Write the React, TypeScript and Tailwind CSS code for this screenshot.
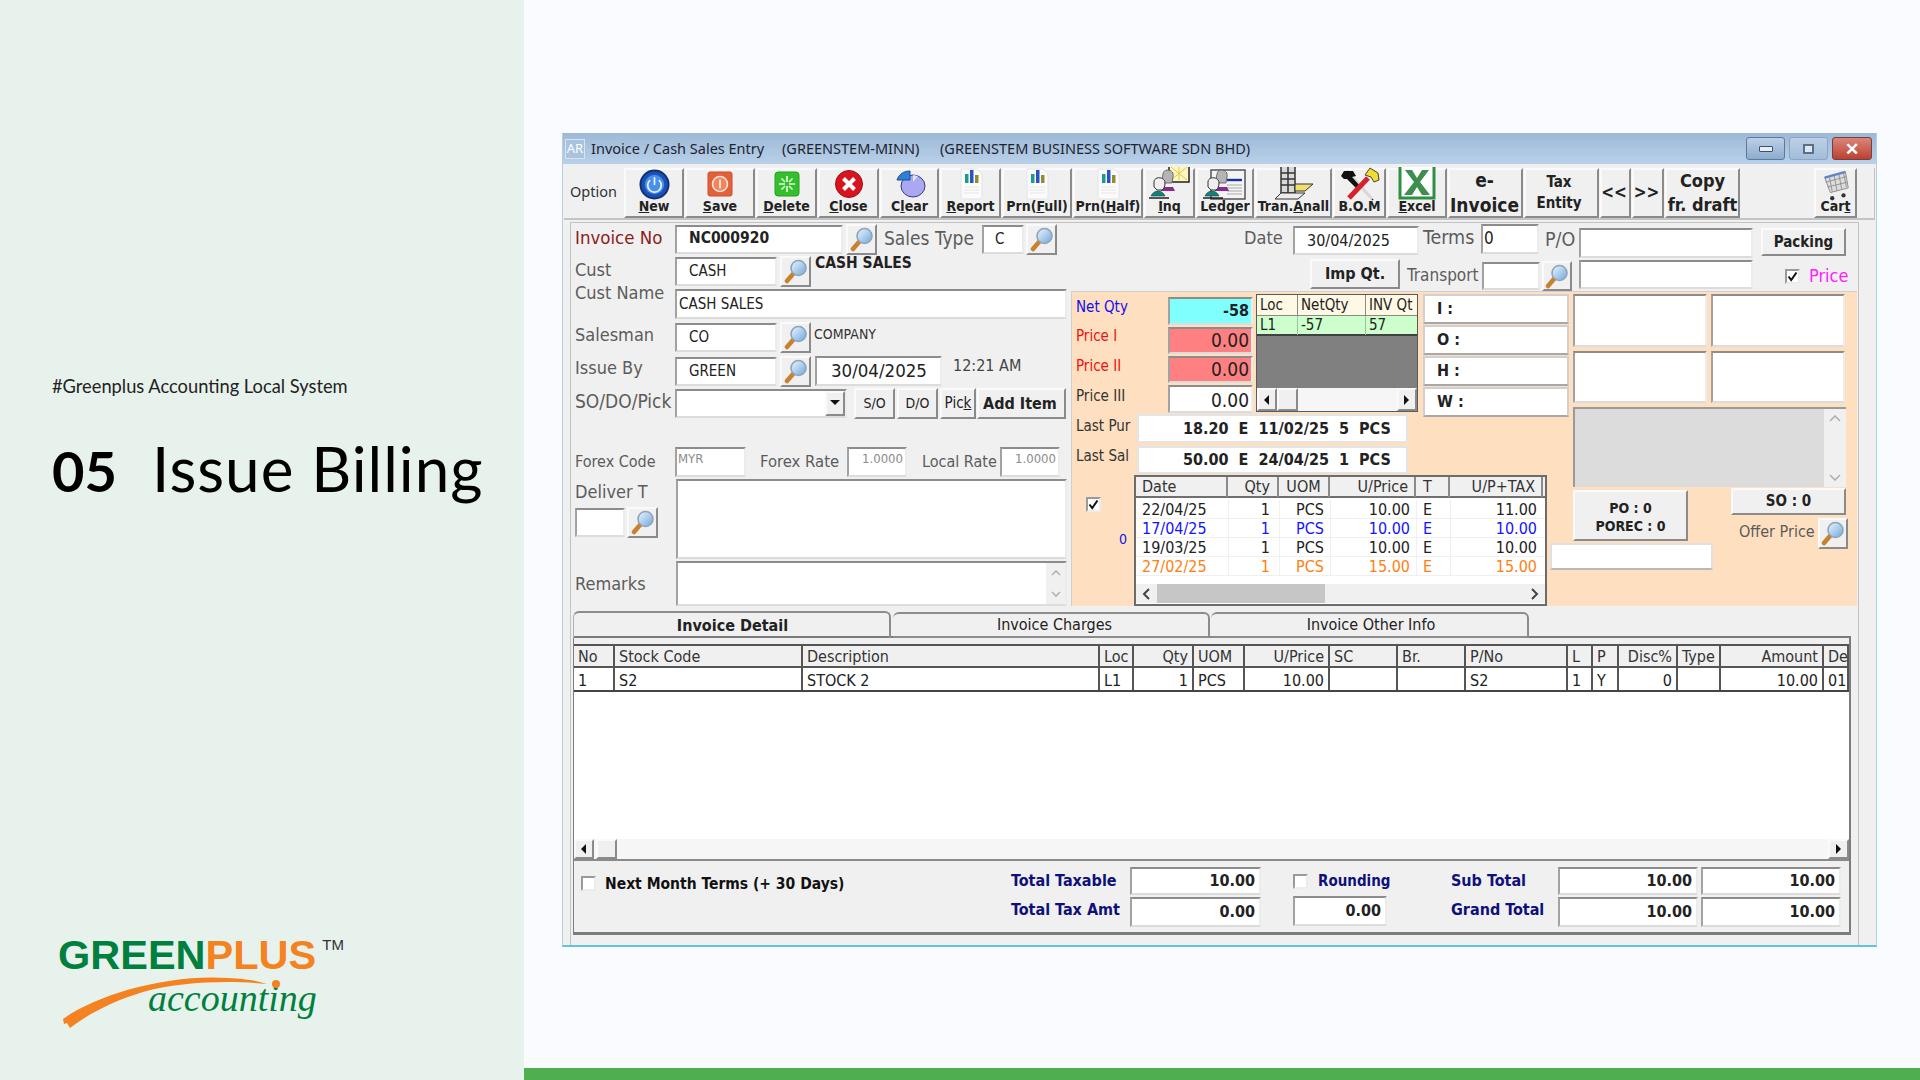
import type { ReactNode } from 'react';

const sunken =
  'flex items-center shrink-0 bg-white border-2 border-t-[#8c8c8c] border-l-[#a2a2a2] border-r-[#ececec] border-b-[#dcdcdc]';
const raised =
  'flex items-center justify-center shrink-0 bg-[#f0f0f0] border-2 border-t-[#fafafa] border-l-[#fafafa] border-r-[#8a8a8a] border-b-[#8a8a8a]';

function Label({ className = '', children }: { className?: string; children: ReactNode }) {
  return (
    <span className={`shrink-0 whitespace-nowrap text-[18px] leading-[22px] text-[#5c5c5c] ${className}`}>
      {children}
    </span>
  );
}

function Magnifier() {
  return (
    <svg width="24" height="25" viewBox="0 0 24 25">
      <defs>
        <linearGradient id="lens" x1="0" y1="0" x2="1" y2="1">
          <stop offset="0" stopColor="#eef7ff" />
          <stop offset="1" stopColor="#6ea6dc" />
        </linearGradient>
      </defs>
      <path d="M9 15 3 22" stroke="#c9812f" strokeWidth="4.5" strokeLinecap="round" />
      <circle cx="14.5" cy="9" r="7.5" fill="url(#lens)" stroke="#8ea4b8" strokeWidth="1.6" />
    </svg>
  );
}

function Search({ className = '' }: { className?: string }) {
  return (
    <div className={`${raised} w-[31px] h-[31px] ${className}`}>
      <Magnifier />
    </div>
  );
}

function Check({ checked = false }: { checked?: boolean }) {
  return (
    <div className="flex items-center justify-center w-[15px] h-[15px] shrink-0 bg-white border-2 border-t-[#9a9a9a] border-l-[#9a9a9a] border-r-[#ececec] border-b-[#ececec]">
      {checked && (
        <svg width="11" height="11" viewBox="0 0 11 11">
          <path d="M1.5 5.5 4.2 9 9.5 1.5" fill="none" stroke="#111" strokeWidth="2" />
        </svg>
      )}
    </div>
  );
}

/* toolbar icons */
function PowerIcon() {
  return (
    <svg width="31" height="31" viewBox="0 0 32 32">
      <circle cx="16" cy="16" r="14.5" fill="#1b50b8" stroke="#12306f" strokeWidth="2" />
      <circle cx="16" cy="16" r="10" fill="#4a8fe8" />
      <path d="M11.5 11.5a7 7 0 1 0 9 0" fill="none" stroke="#e8f2ff" strokeWidth="1.8" />
      <path d="M16 8.5v8" stroke="#e8f2ff" strokeWidth="1.8" />
    </svg>
  );
}

function SaveIcon() {
  return (
    <svg width="28" height="28" viewBox="0 0 28 28">
      <rect x="2" y="2" width="24" height="24" rx="2" fill="#e2603a" stroke="#c9532b" />
      <circle cx="14" cy="14" r="7.5" fill="#ee8660" stroke="#fde6da" strokeWidth="1.6" />
      <path d="M14 9.5v9" stroke="#fde6da" strokeWidth="1.8" />
    </svg>
  );
}

function DeleteIcon() {
  return (
    <svg width="28" height="28" viewBox="0 0 28 28">
      <rect x="2" y="2" width="24" height="24" rx="3" fill="#34c02c" stroke="#279e22" />
      <path
        d="M14 6v6M14 16v6M6 14h6M16 14h6M8.5 8.5l3.5 3.5M16 16l3.5 3.5M19.5 8.5 16 12M12 16l-3.5 3.5"
        stroke="#e6ffe0"
        strokeWidth="1.6"
      />
    </svg>
  );
}

function CloseIcon() {
  return (
    <svg width="30" height="30" viewBox="0 0 30 30">
      <circle cx="15" cy="15" r="13.5" fill="#d8141e" stroke="#9c1016" />
      <path d="M9.5 9.5 20.5 20.5M20.5 9.5 9.5 20.5" stroke="#fff" strokeWidth="4" />
    </svg>
  );
}

function ClearIcon() {
  return (
    <svg width="32" height="30" viewBox="0 0 32 30">
      <ellipse cx="19" cy="17" rx="12" ry="11" fill="#a9a8f0" stroke="#3a3a78" />
      <path d="M3 11 C5 5 10 2 16 2 L16 11 Z" fill="#2f7fd8" stroke="#1e4f90" />
      <path d="M19 6 24 7 19 13Z" fill="#dfe0ff" />
    </svg>
  );
}

function ReportIcon() {
  return (
    <svg width="26" height="32" viewBox="0 0 26 32">
      <path d="M3 1h16l5 5v25H3z" fill="#fbfbfb" stroke="#e4e4e4" />
      <rect x="7" y="6" width="3.5" height="9" fill="#1e9a8a" />
      <rect x="12" y="2" width="3.5" height="13" fill="#2a52c8" />
      <rect x="17" y="7" width="3.5" height="8" fill="#8f8f2a" />
      <path d="M6 19h15M6 22h15M6 25h15" stroke="#e6e6e6" />
    </svg>
  );
}

function Heads() {
  return (
    <>
      <path d="M18 3c5 0 7 3 6 7l-1 6h-7l-3-3 1-6c0-2 2-4 4-4z" fill="#b4b4b4" stroke="#555" strokeWidth=".8" />
      <path d="M12 20h12l2 4H12z" fill="#8a2a90" />
      <path d="M8 11c4-1 8 1 8 5 0 3-1 6-3 7H8l-3-3 0-5c0-2 1-3 3-4z" fill="#efefef" stroke="#333" />
      <path d="M2 29c1-3 4-5 7-5s6 2 7 5z" fill="#157f78" stroke="#0d4d49" strokeWidth=".6" />
      <path d="M0 31h20" stroke="#111" strokeWidth="1.4" />
    </>
  );
}

function InqIcon() {
  return (
    <svg width="42" height="34" viewBox="0 0 42 34">
      <rect x="20" y="-3" width="20" height="18" fill="#fbf7c4" stroke="#222" strokeWidth="1.5" />
      <path d="M22 0l16 13M38 0 22 13M30 -2v15" stroke="#e7c93a" />
      <Heads />
    </svg>
  );
}

function LedgerIcon() {
  return (
    <svg width="44" height="34" viewBox="0 0 44 34">
      <rect x="8" y="3" width="34" height="29" fill="#f4f4f4" stroke="#555" strokeWidth="1.5" />
      <path d="M24 13h15" stroke="#1c2f9c" strokeWidth="2.4" />
      <path d="M24 18h15M24 21h15M24 24h15M24 27h15" stroke="#a8a8a8" />
      <Heads />
    </svg>
  );
}

function TranIcon() {
  return (
    <svg width="42" height="34" viewBox="0 0 42 34">
      <path d="M8 0v26h14V0M8 6h14M8 12h14M8 18h14M15 0v26" fill="#d8d8d8" stroke="#333" strokeWidth="1.5" />
      <path d="M22 17h18l-8 7H22z" fill="#f2e06a" stroke="#333" />
      <path d="M2 32l6-6h24l-7 6z" fill="#ececec" stroke="#333" />
    </svg>
  );
}

function BomIcon() {
  return (
    <svg width="42" height="34" viewBox="0 0 42 34">
      <path d="M8 4 34 33" stroke="#333" strokeWidth="1.5" />
      <path d="M9 5 33 32" stroke="#d8d8d8" strokeWidth="3" />
      <path d="M5 4h9l3 5-4 1 8 9-3 3-10-10-3 0-3-3z" fill="#111" />
      <path d="M10 31 29 11" stroke="#d8202a" strokeWidth="5" />
      <path d="M26 8l5-7 8 5 1 7-5 2-3-5z" fill="#f0dc2c" stroke="#444" />
    </svg>
  );
}

function ExcelIcon() {
  return (
    <svg width="38" height="34" viewBox="0 0 38 34">
      <rect x="2" y="0" width="34" height="30" fill="#fff" />
      <path d="M2 0v31h34V0" fill="none" stroke="#2f8f45" strokeWidth="3" />
      <path d="M7 3h7l5 8 5-8h7l-9 12 10 13h-8l-5-8-5 8H6l10-13z" fill="#3c8f4e" />
    </svg>
  );
}

function CartIcon() {
  return (
    <svg width="30" height="34" viewBox="0 0 30 34">
      <path d="M3 8 25 2l3 17-19 5z" fill="#dcdcdc" stroke="#8a8a8a" />
      <path d="M8 7l3 16M13 6l3 16M18 4l3 16M23 3l3 15M4 13l22-6M6 18l21-5" stroke="#8a8a8a" strokeWidth=".9" />
      <path d="M3 8 25 2" stroke="#5c86c8" strokeWidth="2.5" />
      <circle cx="11" cy="30" r="2.3" fill="#333" />
      <circle cx="23" cy="27" r="2.3" fill="#333" />
    </svg>
  );
}

function Chevron({ dir }: { dir: 'l' | 'r' }) {
  return (
    <svg width="9" height="12" viewBox="0 0 9 12">
      <path d={dir === 'l' ? 'M7 1 2 6l5 5' : 'M2 1l5 5-5 5'} fill="none" stroke="#444" strokeWidth="2" />
    </svg>
  );
}

const toolbarItems = [
  { w: 'w-[60px]', icon: <PowerIcon />, label: <><u>N</u>ew</> },
  { w: 'w-[70px]', icon: <SaveIcon />, label: <><u>S</u>ave</> },
  { w: 'w-[61px]', icon: <DeleteIcon />, label: <><u>D</u>elete</> },
  { w: 'w-[61px]', icon: <CloseIcon />, label: <><u>C</u>lose</> },
  { w: 'w-[59px]', icon: <ClearIcon />, label: <>C<u>l</u>ear</> },
  { w: 'w-[61px]', icon: <ReportIcon />, label: <><u>R</u>eport</> },
  { w: 'w-[70px]', icon: <ReportIcon />, label: <>Prn(<u>F</u>ull)</> },
  { w: 'w-[70px]', icon: <ReportIcon />, label: <>Prn(<u>H</u>alf)</> },
  { w: 'w-[51px]', icon: <InqIcon />, label: <><u>I</u>nq</> },
  { w: 'w-[58px]', icon: <LedgerIcon />, label: <>Ledger</> },
  { w: 'w-[77px]', icon: <TranIcon />, label: <>Tran.<u>A</u>nall</> },
  { w: 'w-[53px]', icon: <BomIcon />, label: <>B.O.M</> },
  { w: 'w-[60px]', icon: <ExcelIcon />, label: <><u>E</u>xcel</> },
];

const historyRows = [
  { date: '22/04/25', qty: '1', uom: 'PCS', price: '10.00', t: 'E', tax: '11.00', color: 'text-[#222222]' },
  { date: '17/04/25', qty: '1', uom: 'PCS', price: '10.00', t: 'E', tax: '10.00', color: 'text-[#1414ff]' },
  { date: '19/03/25', qty: '1', uom: 'PCS', price: '10.00', t: 'E', tax: '10.00', color: 'text-[#222222]' },
  { date: '27/02/25', qty: '1', uom: 'PCS', price: '15.00', t: 'E', tax: '15.00', color: 'text-[#ff8010]' },
];

const historyCols = 'grid-cols-[92px_51px_51px_86px_34px_93px_4px]';
const detailCols =
  'grid-cols-[41px_188px_297px_34px_60px_51px_85px_68px_68px_102px_25px_26px_59px_43px_103px_25px]';

const detailHead = [
  ['No', ''], ['Stock Code', ''], ['Description', ''], ['Loc', ''], ['Qty', 'text-right'], ['UOM', ''],
  ['U/Price', 'text-right'], ['SC', ''], ['Br.', ''], ['P/No', ''], ['L', ''], ['P', ''],
  ['Disc%', 'text-right'], ['Type', ''], ['Amount', 'text-right'], ['De', ''],
];
const detailRow = [
  ['1', ''], ['S2', ''], ['STOCK 2', ''], ['L1', ''], ['1', 'text-right'], ['PCS', ''],
  ['10.00', 'text-right'], ['', ''], ['', ''], ['S2', ''], ['1', ''], ['Y', ''],
  ['0', 'text-right'], ['', ''], ['10.00', 'text-right'], ['01', ''],
];

function Arrow({ dir }: { dir: 'l' | 'r' | 'd' }) {
  const d = dir === 'l' ? 'M7 1v10L2 6z' : dir === 'r' ? 'M2 1v10l5-5z' : 'M0 2h10L5 7z';
  return (
    <svg width="10" height="12" viewBox="0 0 10 12">
      <path d={d} fill="#111" />
    </svg>
  );
}

function Logo() {
  return (
    <div className="relative ml-[6px] w-[300px] h-[100px]">
      <div className="flex items-start">
        <span className="font-['Liberation_Sans',sans-serif] font-bold text-[41.5px] leading-[42px] text-[#00803e]">
          GREEN<span className="text-[#f58220]">PLUS</span>
        </span>
        <span className="ml-[6px] mt-[2px] font-['Liberation_Sans',sans-serif] text-[15px] leading-[18px] text-[#333333]">
          TM
        </span>
      </div>
      <div className="ml-[90px] mt-[2px] font-['Liberation_Serif',serif] italic text-[38px] leading-[40px] text-[#00803e]">
        accounting
      </div>
      <svg className="absolute left-0 top-0" width="300" height="100" viewBox="0 0 300 100">
        <path
          d="M5 85C40 60 110 40 170 44c20 1 30 3 39 6-39-4-89-2-124 8C55 67 30 80 12 94l-3-5-3 1z"
          fill="#f58220"
        />
        <circle cx="218" cy="50" r="4" fill="#f58220" />
      </svg>
    </div>
  );
}

export default function App() {
  return (
    <div className="flex w-[1920px] h-[1080px] overflow-hidden bg-[#f9fbff]">
      {/* left slide panel */}
      <aside className="flex flex-col w-[524px] h-full shrink-0 pl-[52px] pt-[374px] pb-[46px] bg-[#e8f2ec] text-black font-['Lato',sans-serif]">
        <p className="text-[18.3px] leading-[24px] text-[#222222]">#Greenplus Accounting Local System</p>
        <h1 className="flex items-baseline mt-[35px] text-[62px] leading-[70px] font-normal">
          <span className="font-bold w-[100px] text-[56px]">05</span>
          <span className="tracking-[1px]">Issue Billing</span>
        </h1>
        <div className="mt-auto">
          <Logo />
        </div>
      </aside>

      <main className="flex flex-col flex-1 min-w-0">
        <div className="flex-1 pt-[133px] pl-[38px]">
          {/* app window */}
          <div className="flex flex-col w-[1315px] h-[814px] bg-[#f0f0f0] border-x border-[#b4cfe8] border-b-2 border-b-[#62c3dd] font-['DejaVu_Sans_Condensed','DejaVu_Sans',sans-serif] text-[#222222]">
            {/* title bar */}
            <div className="flex items-center h-[31px] shrink-0 pl-[2px] pr-[4px] bg-gradient-to-b from-[#9db9d8] to-[#b9d0e8] font-['Noto_Sans',sans-serif] text-[14.5px] text-[#1c2430]">
              <div className="flex items-center justify-center w-[20px] h-[20px] border border-[#d8e4f0] bg-[#a9c3df] text-white text-[13px]">
                AR
              </div>
              <span className="ml-[6px] mt-[1px] w-[191px] whitespace-nowrap">Invoice / Cash Sales Entry</span>
              <span className="mt-[1px] w-[158px] whitespace-nowrap">(GREENSTEM-MINN)</span>
              <span className="mt-[1px] whitespace-nowrap">(GREENSTEM BUSINESS SOFTWARE SDN BHD)</span>
              <div className="flex ml-auto gap-[4px]">
                <div className="flex items-center justify-center w-[39px] h-[23px] rounded-[3px] border border-[#5d7a9c] bg-gradient-to-b from-[#bcd0e6] to-[#8eaccd]">
                  <div className="w-[14px] h-[6px] rounded-[1px] bg-[#e8eef6] border border-[#40506a]" />
                </div>
                <div className="flex items-center justify-center w-[39px] h-[23px] rounded-[3px] border border-[#8aa6c6] bg-gradient-to-b from-[#bcd0e6] to-[#a3bdd9]">
                  <div className="w-[11px] h-[10px] border-2 border-[#5a6f88] bg-[#dfe8f2]" />
                </div>
                <div className="flex items-center justify-center w-[40px] h-[23px] rounded-[3px] border border-[#7a4038] bg-gradient-to-b from-[#d9857a] to-[#bb4030] text-white font-bold text-[17px] leading-none">
                  ✕
                </div>
              </div>
            </div>

            {/* toolbar */}
            <div className="flex items-stretch gap-[1px] h-[52px] shrink-0 mt-[4px] ml-[1px] mr-[1px] border-b-2 border-[#c4c4c4] border-r">
              <div className="flex items-center w-[59px] pl-[6px] pb-[2px] text-[14.5px] text-[#333333] font-['Noto_Sans',sans-serif]">
                Option
              </div>
              {toolbarItems.map((item, i) => (
                <div key={i} className={`${raised} ${item.w} flex-col !justify-end pb-[2px]`}>
                  <div className="flex items-center justify-center h-[30px] shrink-0">{item.icon}</div>
                  <span className="-mt-[1px] whitespace-nowrap text-[14px] leading-[16px] font-bold text-[#222222]">
                    {item.label}
                  </span>
                </div>
              ))}
              <div className={`${raised} w-[75px] flex-col pr-[2px] font-bold text-[19px] leading-[25px]`}>
                <span>e-</span>
                <span>Invoice</span>
              </div>
              <div className={`${raised} w-[75px] flex-col pr-[5px] font-bold text-[15px] leading-[21px]`}>
                <span>Tax</span>
                <span>Entity</span>
              </div>
              <div className={`${raised} w-[31px] pr-[3px] font-bold text-[17px]`}>&lt;&lt;</div>
              <div className={`${raised} w-[32px] pr-[3px] font-bold text-[17px]`}>&gt;&gt;</div>
              <div className={`${raised} w-[75px] flex-col font-bold text-[18px] leading-[24px] whitespace-nowrap`}>
                <span>Copy</span>
                <span>fr. draft</span>
              </div>
              <div className={`${raised} ml-auto mr-[17px] w-[43px] flex-col !justify-end pb-[2px]`}>
                <CartIcon />
                <span className="-mt-[3px] text-[14px] leading-[15px] font-bold">
                  Car<u>t</u>
                </span>
              </div>
            </div>

            {/* form body */}
            <div className="flex-1 ml-[7px] mt-[2px] w-[1289px] border-l border-t border-r border-[#c2c2c2]">
              <div className="flex h-[383px] pt-[1px]">
                {/* left form column */}
                <div className="flex flex-col w-[492px] ml-[4px] shrink-0">
                  <div className="flex items-center h-[30px]">
                    <Label className="w-[100px] -mt-[2px] !text-[18.5px] !text-[#8b1c1c]">Invoice No</Label>
                    <div className={`${sunken} w-[168px] h-[29px] pl-[12px] text-[15.5px] font-bold`}>NC000920</div>
                    <Search className="ml-[3px]" />
                    <Label className="ml-[7px] w-[98px] -mt-[2px] !text-[19px]">Sales Type</Label>
                    <div className={`${sunken} w-[42px] h-[29px] pl-[11px] text-[15px]`}>C</div>
                    <Search className="ml-[2px]" />
                  </div>
                  <div className="flex items-center h-[31px] mt-[2px]">
                    <Label className="w-[100px] -mt-[4px]">Cust</Label>
                    <div className={`${sunken} w-[102px] h-[29px] pl-[12px] text-[15px]`}>CASH</div>
                    <Search className="ml-[3px]" />
                    <span className="ml-[4px] -mt-[16px] text-[15.5px] font-bold text-[#222222]">CASH SALES</span>
                  </div>
                  <div className="flex items-center h-[30px] mt-[2px]">
                    <Label className="w-[100px] -mt-[22px]">Cust Name</Label>
                    <div className={`${sunken} w-[392px] h-[30px] pl-[2px] text-[15px]`}>CASH SALES</div>
                  </div>
                  <div className="flex items-center h-[29px] mt-[4px]">
                    <Label className="w-[100px] -mt-[5px]">Salesman</Label>
                    <div className={`${sunken} w-[102px] h-[29px] pl-[12px] text-[15px]`}>CO</div>
                    <Search className="ml-[3px]" />
                    <span className="ml-[3px] -mt-[6px] text-[14px] text-[#333333]">COMPANY</span>
                  </div>
                  <div className="flex items-center h-[30px] mt-[4px]">
                    <Label className="w-[100px] -mt-[6px]">Issue By</Label>
                    <div className={`${sunken} w-[102px] h-[29px] pl-[12px] text-[15px]`}>GREEN</div>
                    <Search className="ml-[3px]" />
                    <div className={`${sunken} ml-[4px] w-[127px] h-[30px] pl-[14px] text-[18.5px]`}>30/04/2025</div>
                    <span className="ml-[11px] -mt-[10px] text-[16px] text-[#444444]">12:21 AM</span>
                  </div>
                  <div className="flex items-center h-[31px] mt-[2px]">
                    <Label className="w-[100px] -mt-[6px] !text-[19px]">SO/DO/Pick</Label>
                    <div className={`${sunken} !justify-end w-[172px] h-[29px]`}>
                      <div className={`${raised} w-[20px] h-[25px]`}>
                        <Arrow dir="d" />
                      </div>
                    </div>
                    <div className={`${raised} ml-[7px] w-[41px] h-[31px] text-[14px]`}>S/O</div>
                    <div className={`${raised} ml-[2px] w-[41px] h-[31px] text-[14px]`}>D/O</div>
                    <div className={`${raised} ml-[2px] w-[36px] h-[31px] text-[15px]`}>
                      Pic<u>k</u>
                    </div>
                    <div className={`${raised} ml-[1px] w-[89px] h-[31px] pr-[3px] text-[16px] font-bold`}>Add Item</div>
                  </div>
                  <div className="flex items-center h-[30px] mt-[28px]">
                    <Label className="w-[100px] !text-[16px]">Forex Code</Label>
                    <div className={`${sunken} w-[71px] h-[30px] pl-[1px] pb-[6px] text-[13px] text-[#8a8a8a]`}>MYR</div>
                    <Label className="ml-[14px] w-[87px] !text-[16.5px]">Forex Rate</Label>
                    <div className={`${sunken} w-[60px] h-[30px] !justify-end pr-[2px] pb-[6px] text-[13px] text-[#8a8a8a]`}>
                      1.0000
                    </div>
                    <Label className="ml-[15px] w-[78px] !text-[16px]">Local Rate</Label>
                    <div className={`${sunken} w-[60px] h-[30px] !justify-end pr-[2px] pb-[6px] text-[13px] text-[#8a8a8a]`}>
                      1.0000
                    </div>
                  </div>
                  <div className="flex h-[80px] mt-[2px]">
                    <div className="flex flex-col w-[101px] shrink-0 pt-[2px]">
                      <Label>Deliver T</Label>
                      <div className="flex items-center mt-[4px]">
                        <div className={`${sunken} w-[50px] h-[29px]`} />
                        <Search className="ml-[2px]" />
                      </div>
                    </div>
                    <div className={`${sunken} w-[391px] h-[80px]`} />
                  </div>
                  <div className="flex items-center h-[45px] mt-[2px]">
                    <Label className="w-[101px]">Remarks</Label>
                    <div className={`${sunken} !items-stretch !justify-end w-[391px] h-[45px]`}>
                      <div className="flex flex-col items-center justify-around w-[19px] bg-[#f0f0f0] text-[#b0b0b0]">
                        <svg width="10" height="6" viewBox="0 0 10 6">
                          <path d="M1 5 5 1l4 4" fill="none" stroke="#b0b0b0" strokeWidth="1.5" />
                        </svg>
                        <svg width="10" height="6" viewBox="0 0 10 6">
                          <path d="M1 1l4 4 4-4" fill="none" stroke="#b0b0b0" strokeWidth="1.5" />
                        </svg>
                      </div>
                    </div>
                  </div>
                </div>

                {/* right form column */}
                <div className="flex flex-col w-[786px] ml-[4px] shrink-0">
                  <div className="flex items-start h-[35px] shrink-0">
                    <Label className="ml-[173px] w-[49px] mt-[3px]">Date</Label>
                    <div className={`${sunken} mt-[2px] w-[126px] h-[29px] pl-[12px] text-[16px]`}>30/04/2025</div>
                    <Label className="ml-[4px] w-[58px] mt-[3px] !text-[19.5px]">Terms</Label>
                    <div className={`${sunken} w-[58px] h-[30px] pl-[1px] text-[17px]`}>0</div>
                    <Label className="ml-[6px] w-[34px] mt-[5px] !text-[19.5px]">P/O</Label>
                    <div className={`${sunken} mt-[4px] w-[174px] h-[30px]`} />
                    <div className={`${raised} mt-[4px] ml-[8px] w-[85px] h-[28px] text-[15px] font-bold`}>Packing</div>
                  </div>
                  <div className="flex items-start h-[32px] shrink-0">
                    <div className={`${raised} ml-[239px] w-[90px] h-[30px] text-[16px] font-bold`}>Imp Qt.</div>
                    <Label className="ml-[7px] w-[75px] mt-[5px] !text-[17px]">Transport</Label>
                    <div className={`${sunken} mt-[3px] w-[58px] h-[28px]`} />
                    <Search className="ml-[2px] mt-[2px] !w-[30px] !h-[30px]" />
                    <div className={`${sunken} ml-[7px] mt-[1px] w-[174px] h-[29px]`} />
                    <div className="flex items-center ml-[32px] mt-[6px]">
                      <Check checked />
                      <span className="ml-[9px] text-[18px] leading-[22px] text-[#ff20ff]">Price</span>
                    </div>
                  </div>

                  {/* orange panel */}
                  <div className="flex flex-1 bg-[#fedfc0] border-l border-t border-[#cfcfcf]">
                    <div className="flex flex-col w-[501px] shrink-0">
                      <div className="flex items-start pt-[2px]">
                        <div className="flex flex-col gap-[2px] w-[177px] ml-[4px] mt-[3px] shrink-0 text-[15px]">
                          <div className="flex items-center h-[28px]">
                            <span className="w-[92px] -mt-[8px] text-[#1010f0]">Net Qty</span>
                            <div className={`${sunken} !justify-end !bg-[#80ffff] w-[85px] h-[28px] pr-[2px] text-[16px] font-bold`}>-58</div>
                          </div>
                          <div className="flex items-center h-[27px]">
                            <span className="w-[92px] -mt-[8px] text-[#f01010]">Price I</span>
                            <div className={`${sunken} !justify-end !bg-[#ff8080] w-[85px] h-[27px] pr-[2px] text-[19px]`}>0.00</div>
                          </div>
                          <div className="flex items-center h-[27px]">
                            <span className="w-[92px] -mt-[6px] text-[#f01010]">Price II</span>
                            <div className={`${sunken} !justify-end !bg-[#ff8080] w-[85px] h-[27px] pr-[2px] text-[19px]`}>0.00</div>
                          </div>
                          <div className="flex items-center h-[28px]">
                            <span className="w-[92px] -mt-[6px] text-[#333333]">Price III</span>
                            <div className={`${sunken} !justify-end w-[85px] h-[28px] pr-[2px] pt-[2px] text-[19px]`}>0.00</div>
                          </div>
                        </div>
                        <div className="flex flex-col ml-[3px] w-[162px] h-[118px] shrink-0 bg-[#808080] border border-[#5a5a5a] text-[15px]">
                          <div className="grid grid-cols-[41px_68px_51px] h-[21px] bg-[#fff8e4] border-b border-[#8a8a8a]">
                            <span className="pl-[3px] leading-[21px] border-r border-[#8a8a8a]">Loc</span>
                            <span className="pl-[3px] leading-[21px] border-r border-[#8a8a8a]">NetQty</span>
                            <span className="pl-[3px] leading-[21px] overflow-hidden whitespace-nowrap">INV Qt</span>
                          </div>
                          <div className="grid grid-cols-[41px_68px_51px] h-[20px] bg-[#ccffcc] border-b-2 border-[#404040]">
                            <span className="pl-[3px] leading-[19px] border-r border-[#a0c0a0]">L1</span>
                            <span className="pl-[3px] leading-[19px] border-r border-[#a0c0a0]">-57</span>
                            <span className="pl-[3px] leading-[19px]">57</span>
                          </div>
                          <div className="flex-1" />
                          <div className="flex items-stretch h-[23px] bg-[#f6f6f6]">
                            <div className={`${raised} w-[20px]`}>
                              <Arrow dir="l" />
                            </div>
                            <div className={`${raised} w-[21px]`} />
                            <div className={`${raised} w-[20px] ml-auto`}>
                              <Arrow dir="r" />
                            </div>
                          </div>
                        </div>
                        <div className="flex flex-col gap-[1px] ml-[5px] w-[146px] shrink-0 text-[16px] font-bold">
                          {['I :', 'O :', 'H :', 'W :'].map((t) => (
                            <div
                              key={t}
                              className={`${sunken} !border-[#d0d0d0] !border-b-[#a8a8a8] w-[146px] h-[30px] pl-[12px]`}
                            >
                              {t}
                            </div>
                          ))}
                        </div>
                      </div>
                      <div className="flex items-start -mt-[3px] text-[16px] font-bold">
                        <span className="ml-[4px] w-[61px] mt-[1px] text-[15px] font-normal leading-[22px] text-[#333333]">Last Pur</span>
                        <div className={`${sunken} !border-[#e4e4e4] w-[271px] h-[29px] pl-[44px] whitespace-pre`}>18.20  E  11/02/25  5  PCS</div>
                      </div>
                      <div className="flex items-start mt-[3px] text-[16px] font-bold">
                        <span className="ml-[4px] w-[61px] -mt-[1px] text-[15px] font-normal leading-[22px] text-[#333333]">Last Sal</span>
                        <div className={`${sunken} !border-[#e4e4e4] w-[271px] h-[28px] pl-[44px] whitespace-pre`}>50.00  E  24/04/25  1  PCS</div>
                      </div>
                      <div className="flex flex-1 mt-[1px]">
                        <div className="flex flex-col w-[62px] shrink-0 pl-[14px] pt-[22px]">
                          <Check checked />
                          <span className="mt-[18px] ml-[33px] text-[14px] leading-[18px] text-[#1010f0]">0</span>
                        </div>
                        <div className="flex flex-col w-[413px] h-[131px] shrink-0 bg-white border-2 border-[#6c6c6c] text-[16px]">
                          <div className={`grid ${historyCols} h-[21px] shrink-0 bg-[#f0f0f0] border-b-2 border-[#707070] text-[#333333]`}>
                            <span className="pl-[6px] leading-[20px] border-r-2 border-[#8a8a8a]">Date</span>
                            <span className="pr-[7px] text-right leading-[20px] border-r-2 border-[#8a8a8a]">Qty</span>
                            <span className="text-center leading-[20px] border-r-2 border-[#8a8a8a]">UOM</span>
                            <span className="pr-[6px] text-right leading-[20px] border-r-2 border-[#8a8a8a]">U/Price</span>
                            <span className="pl-[7px] leading-[20px] border-r-2 border-[#8a8a8a]">T</span>
                            <span className="pr-[6px] text-right leading-[20px] border-r-2 border-[#8a8a8a]">U/P+TAX</span>
                            <span />
                          </div>
                          <div className="flex-1 pt-[2px]">
                            {historyRows.map((r) => (
                              <div key={r.date} className={`grid ${historyCols} h-[19px] border-b border-[#f0f0f0] leading-[19px] ${r.color}`}>
                                <span className="pl-[6px]">{r.date}</span>
                                <span className="pr-[9px] text-right border-l border-[#f0f0f0]">{r.qty}</span>
                                <span className="pl-[16px] border-l border-[#f0f0f0]">{r.uom}</span>
                                <span className="pr-[6px] text-right border-l border-[#f0f0f0]">{r.price}</span>
                                <span className="pl-[6px] border-l border-[#f0f0f0]">{r.t}</span>
                                <span className="pr-[6px] text-right border-l border-[#f0f0f0]">{r.tax}</span>
                                <span />
                              </div>
                            ))}
                          </div>
                          <div className="flex items-center h-[19px] mb-[1px] bg-[#f0f0f0]">
                            <span className="flex justify-center w-[21px]">
                              <Chevron dir="l" />
                            </span>
                            <div className="w-[168px] h-full bg-[#c6c6c6]" />
                            <span className="flex justify-center ml-auto w-[21px]">
                              <Chevron dir="r" />
                            </span>
                          </div>
                        </div>
                      </div>
                    </div>

                    <div className="flex flex-col w-[280px] shrink-0 pt-[2px]">
                      <div className="grid grid-cols-[134px_134px] gap-[4px] w-[272px]">
                        <div className={`${sunken} h-[53px]`} />
                        <div className={`${sunken} h-[53px]`} />
                        <div className={`${sunken} h-[52px]`} />
                        <div className={`${sunken} h-[52px]`} />
                      </div>
                      <div className="flex justify-end mt-[4px] w-[273px] h-[80px] bg-[#dcdcdc] border-t-2 border-l-2 border-[#9a9a9a]">
                        <div className="flex flex-col items-center justify-between w-[22px] py-[6px] bg-[#f0f0f0]">
                          <svg width="12" height="7" viewBox="0 0 12 7">
                            <path d="M1 6 6 1l5 5" fill="none" stroke="#b0b0b0" strokeWidth="1.6" />
                          </svg>
                          <svg width="12" height="7" viewBox="0 0 12 7">
                            <path d="M1 1l5 5 5-5" fill="none" stroke="#b0b0b0" strokeWidth="1.6" />
                          </svg>
                        </div>
                      </div>
                      <div className="flex mt-[1px]">
                        <div className="flex flex-col w-[115px] shrink-0 pt-[2px]">
                          <div className={`${raised} flex-col w-[115px] h-[51px] pt-[2px] text-[14px] font-bold leading-[18px]`}>
                            <span>PO : 0</span>
                            <span>POREC : 0</span>
                          </div>
                          <div className={`${sunken} !border-[#e0e0e0] !border-b-[#b8b8b8] -ml-[23px] mt-[2px] w-[163px] h-[27px]`} />
                        </div>
                        <div className="flex flex-col ml-[43px] w-[117px] shrink-0">
                          <div className={`${raised} w-[115px] h-[27px] text-[15px] font-bold`}>SO : 0</div>
                          <div className="flex items-center mt-[3px]">
                            <Label className="ml-[8px] w-[79px] -mt-[3px] !text-[16px]">Offer Price</Label>
                            <Search className="!w-[30px]" />
                          </div>
                        </div>
                      </div>
                    </div>
                  </div>
                </div>
              </div>

              {/* tabs */}
              <div className="flex items-end ml-[2px] mt-[5px] h-[27px] text-[16px]">
                <div className="flex items-center justify-center w-[318px] h-[27px] pl-[2px] rounded-t-[6px] border-t-2 border-x border-r-2 border-[#8c8c8c] border-l-[#b0b0b0] font-bold">
                  Invoice Detail
                </div>
                <div className="flex items-center justify-center ml-[2px] w-[317px] h-[26px] pl-[8px] rounded-t-[6px] border-2 border-[#8c8c8c] border-l-0">
                  Invoice Charges
                </div>
                <div className="flex items-center justify-center ml-[1px] w-[318px] h-[26px] pl-[4px] rounded-t-[6px] border-2 border-[#8c8c8c] border-l-0">
                  Invoice Other Info
                </div>
              </div>

              {/* detail grid */}
              <div className="flex flex-col -mt-[2px] ml-[2px] w-[1278px] h-[299px] border-t-2 border-x border-r-2 border-b-[3px] border-[#7c7c7c] text-[16px]">
                <div className="pt-[6px]">
                  <div className={`grid ${detailCols} h-[24px] border-y-2 border-[#555555] text-[#333333]`}>
                    {detailHead.map(([t, align]) => (
                      <span key={t} className={`px-[4px] leading-[22px] whitespace-nowrap overflow-hidden border-r-2 border-[#555555] ${align}`}>
                        {t}
                      </span>
                    ))}
                  </div>
                  <div className={`grid ${detailCols} h-[24px] bg-white border-b-2 border-[#444444]`}>
                    {detailRow.map(([t, align], i) => (
                      <span key={i} className={`px-[4px] leading-[25px] whitespace-nowrap overflow-hidden border-r-2 border-[#555555] ${align}`}>
                        {t}
                      </span>
                    ))}
                  </div>
                </div>
                <div className="flex-1 bg-white" />
                <div className="flex items-stretch h-[22px] bg-[#f6f6f6] border-b-2 border-[#8a8a8a]">
                  <div className={`${raised} w-[20px]`}>
                    <Arrow dir="l" />
                  </div>
                  <div className={`${raised} ml-[2px] w-[21px]`} />
                  <div className={`${raised} ml-auto w-[21px]`}>
                    <Arrow dir="r" />
                  </div>
                </div>
                <div className="flex h-[71px] pt-[6px] text-[16px] font-bold">
                  <div className="flex items-start w-[437px] shrink-0 pl-[7px] pt-[9px]">
                    <Check />
                    <span className="ml-[9px] -mt-[2px] leading-[20px] text-[15.5px] text-[#111111]">Next Month Terms (+ 30 Days)</span>
                  </div>
                  <div className="flex flex-col w-[119px] shrink-0 text-[#10107a]">
                    <span className="h-[30px] leading-[28px]">Total Taxable</span>
                    <span className="leading-[26px] whitespace-nowrap">Total Tax Amt</span>
                  </div>
                  <div className="flex flex-col gap-[2px] w-[131px] shrink-0">
                    <div className={`${sunken} !justify-end w-[131px] h-[28px] pr-[4px]`}>10.00</div>
                    <div className={`${sunken} !justify-end w-[131px] h-[30px] pr-[4px]`}>0.00</div>
                  </div>
                  <div className="flex flex-col ml-[32px] w-[94px] shrink-0">
                    <div className="flex items-center h-[30px] -mt-[1px] text-[15px]">
                      <Check />
                      <span className="ml-[10px] text-[#10107a]">Rounding</span>
                    </div>
                    <div className={`${sunken} !justify-end w-[94px] h-[30px] pr-[4px]`}>0.00</div>
                  </div>
                  <div className="flex flex-col ml-[64px] w-[107px] shrink-0 text-[#10107a]">
                    <span className="h-[30px] leading-[28px]">Sub Total</span>
                    <span className="leading-[26px]">Grand Total</span>
                  </div>
                  <div className="flex flex-col gap-[2px] w-[140px] shrink-0">
                    <div className={`${sunken} !justify-end w-[140px] h-[28px] pr-[4px]`}>10.00</div>
                    <div className={`${sunken} !justify-end w-[140px] h-[30px] pr-[4px]`}>10.00</div>
                  </div>
                  <div className="flex flex-col gap-[2px] ml-[3px] w-[140px] shrink-0">
                    <div className={`${sunken} !justify-end w-[140px] h-[28px] pr-[4px]`}>10.00</div>
                    <div className={`${sunken} !justify-end w-[140px] h-[30px] pr-[4px]`}>10.00</div>
                  </div>
                </div>
              </div>
            </div>
          </div>
        </div>
        <div className="h-[12px] shrink-0 bg-[#4fae4f]" />
      </main>
    </div>
  );
}
